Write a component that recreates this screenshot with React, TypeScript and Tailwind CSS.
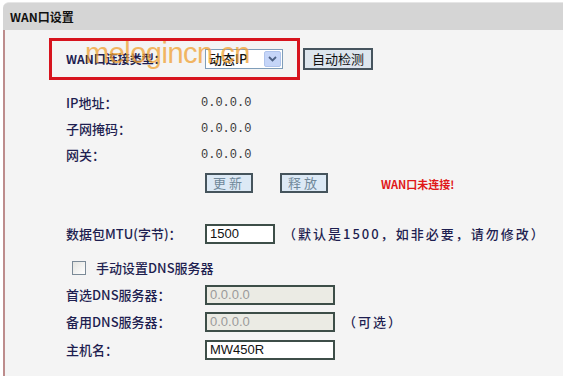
import React from "react";

const cjk = { fontFamily: '"Noto Sans CJK SC", "Noto Sans", sans-serif' };
const arial = { fontFamily: '"Liberation Sans", Arial, sans-serif' };
const mono = { fontFamily: '"Liberation Mono", "DejaVu Sans Mono", monospace' };

function Label({ children }: { children: React.ReactNode }) {
  return (
    <div className="w-[139px] shrink-0 text-[13px] font-medium text-[#1e1e50]" style={cjk}>
      {children}
    </div>
  );
}

function TextBox({ value, disabled }: { value: string; disabled?: boolean }) {
  return (
    <div
      className={
        "h-[20px] border-2 border-[#3d4e48] flex items-center pl-[3px] text-[13px] " +
        (disabled ? "bg-[#ebebe4] text-[#9a9a9a]" : "bg-white text-[#111]")
      }
      style={{ ...arial, width: disabled ? 130 : undefined }}
    >
      {value}
    </div>
  );
}

function InfoRow({ label, value }: { label: string; value: string }) {
  return (
    <div className="flex items-center h-[26px]">
      <div className="w-[135px] shrink-0 text-[13px] font-medium text-[#1e1e50]" style={cjk}>
        {label}
      </div>
      <div className="text-[12px] text-[#3a3a3a]" style={mono}>
        {value}
      </div>
    </div>
  );
}

function GrayButton({ text }: { text: string }) {
  return (
    <div
      className="w-[48px] h-[20px] border-2 border-[#45545c] bg-[#dce9f5] flex items-center justify-center text-[13px] tracking-[3px] text-[#70889a]"
      style={cjk}
    >
      {text}
    </div>
  );
}

export default function App() {
  return (
    <div className="w-[563px] h-[376px] bg-white overflow-hidden">
      <div className="ml-[3px] mt-[2px] h-[28px] bg-[#d5d5d5] rounded-tl-[6px] border-t border-[#e6e6e6] flex items-center pl-[7px]">
        <span className="text-[12px] font-semibold text-[#111]" style={cjk}>
          WAN口设置
        </span>
      </div>
      <div className="ml-[3px] h-[346px] bg-[#f4f4f4] border-l-2 border-[#bd8c8c] pl-[44px]">
        {/* connection type row */}
        <div className="relative flex items-center pt-[8px]">
          <div className="w-[251px] h-[42px] border-[3px] border-[#d7141e] flex items-center pl-[14px]">
            <div className="w-[139px] shrink-0 text-[12px] font-bold text-[#1e1e50]" style={cjk}>
              WAN口连接类型：
            </div>
            <div className="w-[78px] h-[20px] border border-[#7f9db9] bg-white flex items-center">
              <span className="flex-1 pl-[3px] text-[13px] font-medium text-[#111]" style={cjk}>
                动态IP
              </span>
              <span className="w-[17px] h-[16px] mr-[1px] bg-[#c5d5f8] border border-[#b0c4ec] rounded-[2px] flex items-center justify-center">
                <svg width="9" height="6" viewBox="0 0 9 6">
                  <path d="M1 1 L4.5 4.5 L8 1" stroke="#4d6185" strokeWidth="1.8" fill="none" />
                </svg>
              </span>
            </div>
          </div>
          <div
            className="ml-[3px] w-[70px] h-[22px] border-2 border-[#46545e] bg-[#dde6ee] flex items-center justify-center text-[13px] text-[#111]"
            style={cjk}
          >
            自动检测
          </div>
          <div
            className="absolute left-[36px] top-[9px] text-[29px] leading-none text-[#f0a030] opacity-75 tracking-[-0.5px] pointer-events-none"
            style={arial}
          >
            melogincn.cn
          </div>
        </div>

        <div className="pl-[17px] mt-[10px]">
          <InfoRow label="IP地址：" value="0.0.0.0" />
          <InfoRow label="子网掩码：" value="0.0.0.0" />
          <InfoRow label="网关：" value="0.0.0.0" />

          <div className="flex items-center h-[20px] mt-[5px]">
            <div className="w-[139px] shrink-0" />
            <GrayButton text="更新" />
            <div className="ml-[27px]">
              <GrayButton text="释放" />
            </div>
            <div className="ml-[53px] mt-[2px] text-[11px] font-bold text-[#e01818]" style={cjk}>
              WAN口未连接!
            </div>
          </div>

          <div className="flex items-center mt-[31px]">
            <Label>数据包MTU(字节)：</Label>
            <div className="w-[70px]">
              <TextBox value="1500" />
            </div>
            <div className="ml-[8px] text-[13px] font-medium tracking-[2px] text-[#1e1e50]" style={cjk}>
              （默认是1500，如非必要，请勿修改）
            </div>
          </div>

          <div className="flex items-center h-[20px] mt-[14px]">
            <div className="ml-[6px] w-[14px] h-[14px] border border-[#7b8a97] bg-gradient-to-br from-[#e4e4e0] to-white" />
            <div className="ml-[10px] text-[13px] font-medium text-[#1e1e50]" style={cjk}>
              手动设置DNS服务器
            </div>
          </div>

          <div className="flex items-center mt-[7px]">
            <Label>首选DNS服务器：</Label>
            <TextBox value="0.0.0.0" disabled />
          </div>

          <div className="flex items-center mt-[7px]">
            <Label>备用DNS服务器：</Label>
            <TextBox value="0.0.0.0" disabled />
            <div className="ml-[8px] text-[13px] font-medium tracking-[2px] text-[#1e1e50]" style={cjk}>
              （可选）
            </div>
          </div>

          <div className="flex items-center mt-[8px]">
            <Label>主机名：</Label>
            <div className="w-[130px]">
              <TextBox value="MW450R" />
            </div>
          </div>
        </div>
      </div>
    </div>
  );
}
